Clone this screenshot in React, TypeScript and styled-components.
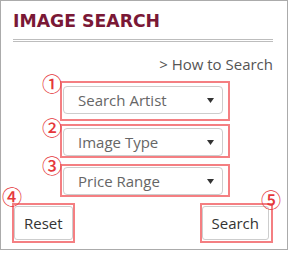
import React from 'react';
import styled, {createGlobalStyle} from 'styled-components';

const GlobalStyle = createGlobalStyle`
  html, body {
    margin: 0;
    padding: 0;
    background: #fff;
  }
  body {
    font-family: 'Open Sans', 'Noto Sans', sans-serif;
  }
`;

const Panel = styled.section`
  box-sizing: border-box;
  width: 288px;
  height: 250px;
  border: 1px solid #ababab;
  padding: 10px 14px 0 12px;
`;

const Title = styled.h2`
  margin: 0;
  padding: 0 0 8px 0;
  font-family: 'DejaVu Sans', Verdana, sans-serif;
  font-weight: bold;
  font-size: 17.3px;
  line-height: 20px;
  color: #7a1836;
  border-bottom: 3px double #bdbdbd;
`;

const HelpLink = styled.a`
  display: block;
  margin-top: 12px;
  text-align: right;
  font-size: 15px;
  line-height: 20px;
  color: #555;
  text-decoration: none;
`;

const SelectStack = styled.div`
  display: flex;
  flex-direction: column;
  align-items: flex-start;
  margin-top: 7px;
  padding-left: 47px;
`;

const Marked = styled.div<{$pad: string; $mt?: number}>`
  position: relative;
  display: flex;
  border: 2px solid #f47f82;
  padding: ${(p) => p.$pad};
  margin-top: ${(p) => p.$mt ?? 0}px;
`;

const Badge = styled.span<{$left?: number; $right?: number; $top: number}>`
  position: absolute;
  top: ${(p) => p.$top}px;
  ${(p) => (p.$right !== undefined ? `right: ${p.$right}px;` : `left: ${p.$left}px;`)}
  font-family: 'Noto Sans CJK JP', sans-serif;
  font-size: 20px;
  font-weight: 500;
  line-height: 20px;
  color: #e5383b;
`;

const SelectBox = styled.div`
  box-sizing: border-box;
  width: 160px;
  height: 28px;
  display: flex;
  align-items: center;
  justify-content: space-between;
  padding: 0 8px 0 14px;
  border: 1px solid #cdcdcd;
  border-radius: 4px;
  background: #fff;
  font-size: 15px;
  color: #666;
`;

const ButtonRow = styled.div`
  display: flex;
  justify-content: space-between;
  margin: 6px 0 0 -1px;
`;

const Button = styled.button`
  box-sizing: border-box;
  height: 34px;
  padding: 0 9px;
  border: 1px solid #cdcdcd;
  border-radius: 3px;
  background: #fff;
  font-family: 'Open Sans', 'Noto Sans', sans-serif;
  font-size: 15px;
  color: #333;
`;

const Arrow = () => (
  <svg width="7" height="5" viewBox="0 0 7 5">
    <path d="M0 0h7L3.5 5z" fill="#333" />
  </svg>
);

const fields = [
  {label: 'Search Artist', pad: '3px 5px 5px 1px', mt: 0, top: -9, n: '①'},
  {label: 'Image Type', pad: '2px 5px 0 1px', mt: 3, top: -8, n: '②'},
  {label: 'Price Range', pad: '1px 5px 0 1px', mt: 6, top: -10, n: '③'},
];

const App: React.FC = () => {
  return (
    <>
      <GlobalStyle />
      <Panel>
        <Title>IMAGE SEARCH</Title>
        <HelpLink href="#">&gt; How to Search</HelpLink>
        <SelectStack>
          {fields.map((f) => (
            <Marked key={f.label} $pad={f.pad} $mt={f.mt}>
              <Badge $left={-20} $top={f.top}>{f.n}</Badge>
              <SelectBox>
                <span>{f.label}</span>
                <Arrow />
              </SelectBox>
            </Marked>
          ))}
        </SelectStack>
        <ButtonRow>
          <Marked $pad="1px 0">
            <Badge $left={-12} $top={-18}>④</Badge>
            <Button>Reset</Button>
          </Marked>
          <Marked $pad="1px 2px 1px 0">
            <Badge $right={-10} $top={-15}>⑤</Badge>
            <Button>Search</Button>
          </Marked>
        </ButtonRow>
      </Panel>
    </>
  );
};

export default App;
